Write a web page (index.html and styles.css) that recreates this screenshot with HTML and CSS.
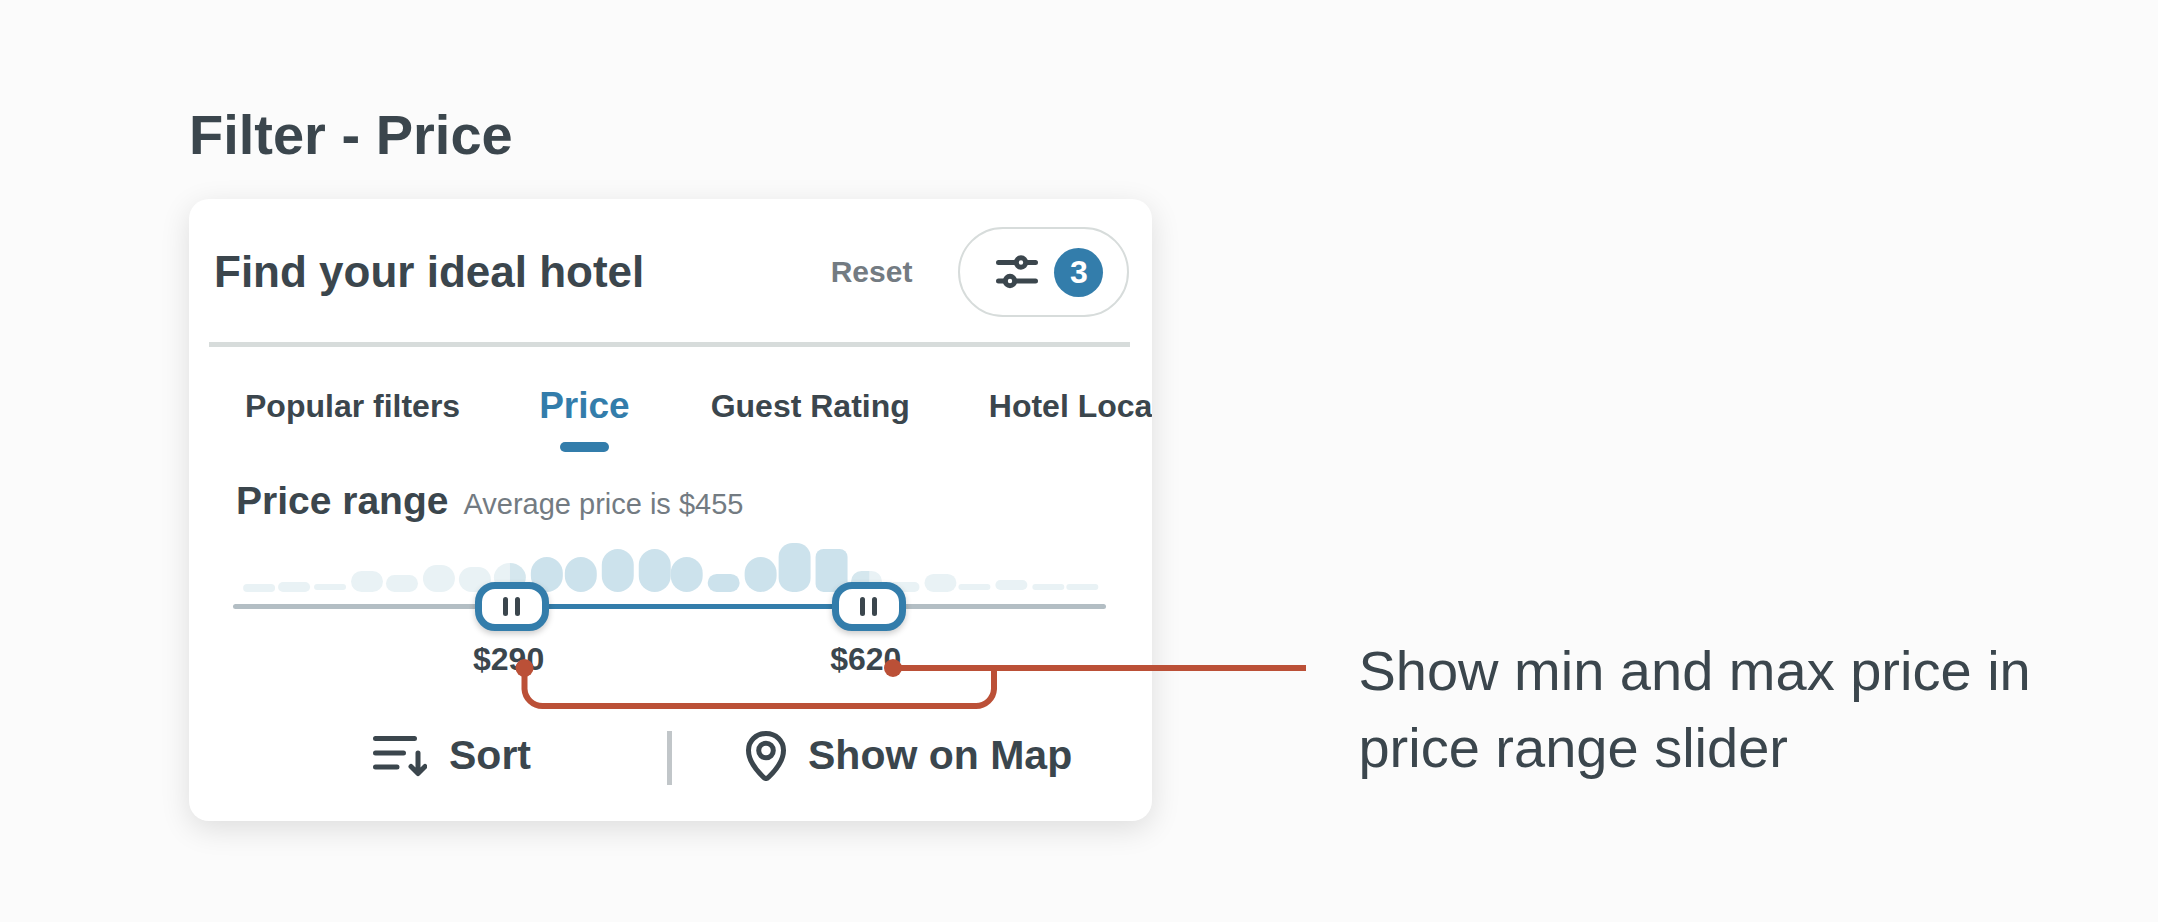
FILE: index.html
```html
<!DOCTYPE html>
<html lang="en">
<head>
  <meta charset="UTF-8">
  <meta name="viewport" content="width=device-width, initial-scale=1.0">
  <title>Filter - Price</title>
  <link rel="stylesheet" href="styles.css">
</head>
<body>
  <main class="page">
    <h1 class="title">Filter - Price</h1>
    <div class="example">
      <div class="card-wrap">
        <section class="card">
          <header class="card-header">
            <h2 class="card-title">Find your ideal hotel</h2>
            <button class="reset" type="button">Reset</button>
            <button class="filter-button" type="button" aria-label="Filters, 3 active">
              <svg class="icon" width="42" height="34" viewBox="0 0 42 34" fill="none" stroke="#3b464d" stroke-width="5" stroke-linecap="round">
                <path d="M2.5 7.5H39.5M2.5 26H39.5"/>
                <circle cx="25" cy="7.5" r="4.7" fill="#fff"/>
                <circle cx="14" cy="26" r="4.7" fill="#fff"/>
              </svg>
              <span class="count">3</span>
            </button>
          </header>

          <nav class="tabs">
            <button class="tab" type="button">Popular filters</button>
            <button class="tab active" type="button">Price</button>
            <button class="tab" type="button">Guest Rating</button>
            <button class="tab" type="button">Hotel Location</button>
          </nav>

          <div class="price">
            <div class="price-heading">
              <h3 class="price-title">Price range</h3>
              <span class="average">Average price is $455</span>
            </div>

            <svg class="histogram" viewBox="0 0 874 49" aria-hidden="true">
              <g fill="#e9f2f5">
                <rect x="10" y="41" width="32" height="8" rx="4"/>
                <rect x="45" y="39" width="32" height="10" rx="5"/>
                <rect x="81" y="41" width="32" height="6" rx="3"/>
                <rect x="118" y="28" width="32" height="21" rx="10.5"/>
                <rect x="153" y="32" width="32" height="17" rx="8.5"/>
                <rect x="190" y="22" width="32" height="27" rx="13.5"/>
                <rect x="226" y="24" width="32" height="25" rx="12.5"/>
                <path d="M277 20A16 14.5 0 0 0 277 49Z"/>
                <path d="M637 28H639A10.5 10.5 0 0 1 639 49H637Z"/>
                <rect x="655" y="39" width="32" height="10" rx="5"/>
                <rect x="692" y="31" width="32" height="18" rx="9"/>
                <rect x="726" y="41" width="32" height="6" rx="3"/>
                <rect x="763" y="37" width="32" height="10" rx="5"/>
                <rect x="800" y="41" width="32" height="6" rx="3"/>
                <rect x="834" y="41" width="32" height="6" rx="3"/>
              </g>
              <g fill="#d5e7ee">
                <path d="M277 20A16 14.5 0 0 1 277 49Z"/>
                <path d="M637 28H629A10.5 10.5 0 0 0 629 49H637Z"/>
              </g>
              <g fill="#cce2ec">
                <rect x="298" y="14" width="32" height="35" rx="16"/>
                <rect x="332" y="14" width="32" height="35" rx="16"/>
                <rect x="369" y="6" width="32" height="43" rx="16"/>
                <rect x="406" y="6" width="32" height="43" rx="16"/>
                <rect x="438" y="14" width="32" height="35" rx="16"/>
                <rect x="475" y="31" width="32" height="18" rx="9"/>
                <rect x="512" y="14" width="32" height="35" rx="16"/>
                <rect x="546" y="0" width="32" height="49" rx="14"/>
                <rect x="583" y="6" width="32" height="43" rx="8"/>
              </g>
            </svg>

            <div class="slider">
              <div class="track"><div class="fill" style="left: 32%; right: 27%"></div></div>
              <input class="range" id="min-price" type="range" min="66" max="805" value="290" aria-label="Minimum price">
              <input class="range" id="max-price" type="range" min="66" max="805" value="620" aria-label="Maximum price">
            </div>
            <div class="values">
              <output for="min-price">$290</output>
              <output for="max-price">$620</output>
            </div>
          </div>

          <footer class="actions">
            <button class="action" type="button">
              <svg class="icon" width="54" height="42" viewBox="0 0 54 42" fill="none" stroke="#3b464d" stroke-width="5" stroke-linecap="round" stroke-linejoin="round">
                <path d="M2.5 3.5H41.5M2.5 18H30.5M2.5 32H24M45 18V38M38 31.5L45 38.5L52 31.5"/>
              </svg>
              Sort
            </button>
            <span class="divider"></span>
            <button class="action" type="button">
              <svg class="icon" width="40" height="50" viewBox="0 0 40 50" fill="none" stroke="#3b464d" stroke-width="5" stroke-linejoin="round">
                <path d="M20 2.5C10 2.5 2.5 9.8 2.5 19.2C2.5 29 10.5 39.5 17.5 46.2Q20 48.6 22.5 46.2C29.5 39.5 37.5 29 37.5 19.2C37.5 9.8 30 2.5 20 2.5Z"/>
                <circle cx="20" cy="19.5" r="7.3"/>
              </svg>
              Show on Map
            </button>
          </footer>
        </section>

        <!-- callout lines from both prices to the note -->
        <svg class="callout" width="1120" height="60" viewBox="0 0 1120 60" aria-hidden="true">
          <path d="M334.5 9V30A18 18 0 0 0 352.5 47H786A18 18 0 0 0 804 30V9M703 9H1116" fill="none" stroke="#bb5037" stroke-width="6"/>
          <circle cx="334.5" cy="9" r="9" fill="#bb5037"/>
          <circle cx="703" cy="9" r="9" fill="#bb5037"/>
        </svg>
      </div>

      <p class="note">Show min and max price in price range slider</p>
    </div>
  </main>

  <script>
    const minPrice = document.getElementById('min-price');
    const maxPrice = document.getElementById('max-price');
    const outputs = document.querySelectorAll('.values output');
    const fill = document.querySelector('.fill');

    // thumb is 74px wide, so its centre travels over the track width less 74px
    function centre(input) {
      const part = (input.value - input.min) / (input.max - input.min);
      return (37 + part * (input.offsetWidth - 74)) / input.offsetWidth * 100;
    }

    function update() {
      outputs[0].textContent = '$' + minPrice.value;
      outputs[1].textContent = '$' + maxPrice.value;
      fill.style.left = centre(minPrice) + '%';
      fill.style.right = 100 - centre(maxPrice) + '%';
    }

    minPrice.addEventListener('input', update);
    maxPrice.addEventListener('input', update);
  </script>
</body>
</html>
```
FILE: styles.css
```css
* {
  box-sizing: border-box;
}
body {
  margin: 0;
  background-color: #fbfbfb;
  color: #3b464d;
  font-family: "Liberation Sans", Arial, sans-serif;
}
h1, h2, h3, p {
  margin: 0;
}
button {
  padding: 0;
  border: none;
  background: none;
  color: inherit;
  font-family: inherit;
  font-weight: bold;
  white-space: nowrap;
  cursor: pointer;
}
.icon {
  display: block;
  flex: none;
}
.page {
  padding: 103px 100px 96px 189px;
}
.title {
  margin-bottom: 32px;
  font-size: 56px;
  line-height: 64px;
}
.example {
  display: flex;
  align-items: flex-end;
  gap: 206px;
}
.card-wrap {
  position: relative;
  flex: 0 1 964px;
  min-width: 0;
}
.card {
  overflow: hidden;
  padding-bottom: 36px;
  border-radius: 20px;
  background-color: #fff;
  box-shadow: 0 8px 30px rgba(0, 0, 0, 0.12);
}

/* header */
.card-header {
  display: flex;
  align-items: center;
  margin: 0 22px 0 20px;
  padding: 28px 1px 25px 5px;
  border-bottom: 5px solid #d7dcdb;
}
.card-title {
  flex: 1;
  font-size: 44px;
  line-height: 48px;
}
.reset {
  margin-right: 46px;
  color: #737b82;
  font-size: 30px;
}
.filter-button {
  display: flex;
  align-items: center;
  gap: 16px;
  height: 90px;
  padding: 0 24px 0 36px;
  border: 2px solid #d7dcdb;
  border-radius: 45px;
}
.count {
  width: 49px;
  border-radius: 50%;
  background-color: #337dab;
  color: #fff;
  font-size: 32px;
  line-height: 49px;
}

/* tabs */
.tabs {
  display: flex;
  gap: 79px;
  padding: 35px 0 0 56px;
}
.tab {
  flex: none;
  height: 70px;
  padding-bottom: 22px;
  font-size: 32px;
  line-height: 48px;
}
.tab.active {
  padding: 0 2px 0 0;
  color: #337dab;
  font-size: 37px;
}
.tab.active::after {
  content: "";
  display: block;
  width: 49px;
  height: 10px;
  margin: 12px auto 0;
  border-radius: 5px;
  background-color: #337dab;
}

/* price range */
.price {
  margin: 25px 46px 0 44px;
}
.price-heading {
  display: flex;
  align-items: baseline;
  gap: 15px;
  padding-left: 3px;
}
.price-title {
  font-size: 39px;
  line-height: 48px;
}
.average {
  color: #737b82;
  font-size: 29px;
}
.histogram {
  display: block;
  width: 100%;
  margin-top: 18px;
}
.slider {
  position: relative;
  height: 49px;
  margin-top: -10px;
}
.track {
  position: absolute;
  top: 22px;
  left: 0;
  right: 0;
  height: 5px;
  border-radius: 3px;
  background-color: #b3bec4;
}
.fill {
  position: absolute;
  top: 0;
  bottom: 0;
  background-color: #337dab;
}
.range {
  position: absolute;
  top: 0;
  left: 0;
  width: 100%;
  height: 49px;
  margin: 0;
  background: none;
  appearance: none;
  pointer-events: none;
}
.range::-webkit-slider-thumb {
  width: 74px;
  height: 49px;
  border: 7px solid #337dab;
  border-radius: 20px;
  background: #fff url("data:image/svg+xml,%3Csvg xmlns='http://www.w3.org/2000/svg' width='18' height='19'%3E%3Cg fill='%233b464d'%3E%3Crect width='5' height='19' rx='2.5'/%3E%3Crect x='12' width='5' height='19' rx='2.5'/%3E%3C/g%3E%3C/svg%3E") center no-repeat;
  box-shadow: 0 3px 6px rgba(0, 0, 0, 0.2);
  appearance: none;
  pointer-events: auto;
  cursor: pointer;
}
.values {
  display: flex;
  gap: 286px;
  margin-top: 8px;
  padding-left: 240px;
  font-size: 32px;
  font-weight: bold;
  line-height: 40px;
}

/* bottom actions */
.actions {
  display: flex;
  margin-top: 52px;
  padding-left: 184px;
}
.action {
  display: flex;
  align-items: center;
  gap: 22px;
  height: 54px;
  padding-bottom: 4px;
  font-size: 41px;
}
.divider {
  width: 5px;
  margin: 0 74px 0 136px;
  background-color: #c1c6c9;
}

/* annotation */
.callout {
  position: absolute;
  top: 460px;
  left: 1px;
  pointer-events: none;
}
.note {
  flex: 0 1 700px;
  margin-bottom: 35px;
  font-size: 56px;
  line-height: 77px;
}
```
